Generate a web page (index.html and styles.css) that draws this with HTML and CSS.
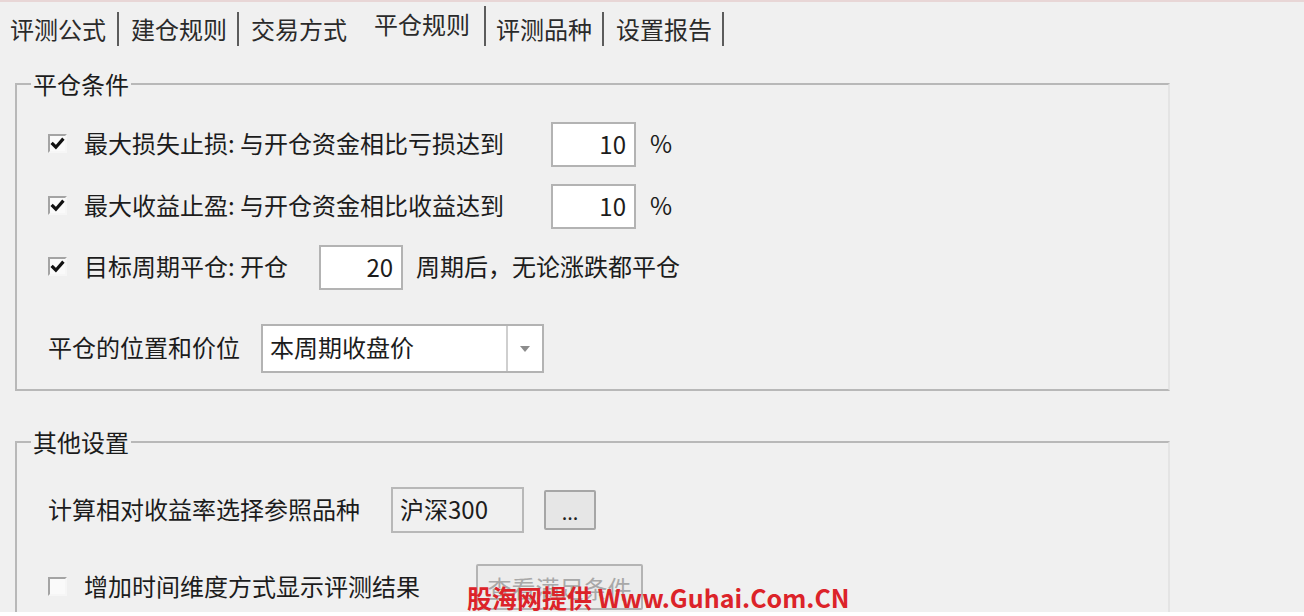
FILE: index.html
```html
<!DOCTYPE html>
<html lang="zh-CN">
<head>
    <meta charset="UTF-8">
    <title>平仓规则</title>
    <link rel="stylesheet" href="styles.css">
</head>
<body>
    <div class="window">
        <div class="tabs">
            <span class="tab first">评测公式</span>
            <span class="tab">建仓规则</span>
            <span class="tab before-active">交易方式</span>
            <span class="tab active">平仓规则</span>
            <span class="tab fifth">评测品种</span>
            <span class="tab">设置报告</span>
        </div>

        <fieldset class="group group-close">
            <legend>平仓条件</legend>
            <div class="row row-1">
                <span class="check checked"><svg viewBox="0 0 14 14" width="15" height="15"><path d="M1.5 6.5 L5.5 10.5 L12.5 2.5" fill="none" stroke="#111" stroke-width="3"/></svg></span>
                <span class="label wide">最大损失止损: 与开仓资金相比亏损达到</span>
                <span class="num">10</span>
                <span class="unit">%</span>
            </div>
            <div class="row row-2">
                <span class="check checked"><svg viewBox="0 0 14 14" width="15" height="15"><path d="M1.5 6.5 L5.5 10.5 L12.5 2.5" fill="none" stroke="#111" stroke-width="3"/></svg></span>
                <span class="label wide">最大收益止盈: 与开仓资金相比收益达到</span>
                <span class="num">10</span>
                <span class="unit">%</span>
            </div>
            <div class="row row-3">
                <span class="check checked"><svg viewBox="0 0 14 14" width="15" height="15"><path d="M1.5 6.5 L5.5 10.5 L12.5 2.5" fill="none" stroke="#111" stroke-width="3"/></svg></span>
                <span class="label">目标周期平仓: 开仓</span>
                <span class="num num-period">20</span>
                <span class="label after">周期后，无论涨跌都平仓</span>
            </div>
            <div class="row row-4">
                <span class="label">平仓的位置和价位</span>
                <div class="select">
                    <span class="select-text">本周期收盘价</span>
                    <span class="select-arrow"><svg viewBox="0 0 10 6" width="10" height="6"><path d="M0 0 H10 L5 6 Z" fill="#8c8c8c"/></svg></span>
                </div>
            </div>
        </fieldset>

        <fieldset class="group group-other">
            <legend>其他设置</legend>
            <div class="row row-ref">
                <span class="label">计算相对收益率选择参照品种</span>
                <span class="readonly">沪深300</span>
                <button type="button" class="btn btn-more">...</button>
            </div>
            <div class="row row-time">
                <span class="check"></span>
                <span class="label">增加时间维度方式显示评测结果</span>
                <button type="button" class="btn btn-view" disabled>查看满足条件</button>
            </div>
        </fieldset>

        <div class="watermark">股海网提供 Www.Guhai.Com.CN</div>
    </div>
</body>
</html>
```

FILE: styles.css
```css
body {
    margin: 0;
    background-color: #fff;
    font-family: "Noto Sans CJK SC", "Microsoft YaHei", sans-serif;
    font-size: 24px;
    color: #1c1c1c;
}
.window {
    position: relative;
    height: 610px;
    overflow: hidden;
    background-color: #f0f0f0;
    border-top: 2px solid #e8d6d6;
}

/* tabs */
.tabs {
    display: flex;
    align-items: flex-end;
    height: 40px;
    padding: 4px 0 0 10px;
}
.tab {
    height: 34px;
    line-height: 34px;
    padding: 0 10px 0 12px;
    border-right: 2px solid #5c5c5c;
    color: #2a2a2a;
}
.tab.first {
    padding-left: 0;
    padding-right: 11px;
}
.tab.before-active {
    border-right: none;
    padding-right: 14px;
}
.tab.active {
    height: 40px;
    line-height: 36px;
    padding: 0 14px 0 13px;
}
.tab.fifth {
    padding-left: 10px;
}

/* group boxes */
.group {
    width: 1137px;
    margin: 23px 0 0 15px;
    padding: 23px 0 16px 14px;
    border: 2px solid #b8b8b8;
    border-right-color: #e4e4e4;
}
.group legend {
    padding: 0 2px;
    line-height: 30px;
}
.group-other {
    margin-top: 36px;
    padding-top: 30px;
}

.row {
    display: flex;
    align-items: center;
    padding-left: 17px;
    height: 45px;
}
.row-2 { margin-top: 17px; }
.row-3 { margin-top: 16px; }
.row-4 {
    margin-top: 34px;
    height: 49px;
}
.row-ref { height: 46px; }
.row-time {
    height: 46px;
    margin-top: 31px;
}

.label {
    padding-bottom: 4px;
    white-space: nowrap;
}
.label.wide { width: 467px; }
.label.after { margin-left: 13px; }

.check {
    box-sizing: border-box;
    width: 19px;
    height: 19px;
    margin-right: 17px;
    margin-bottom: 2px;
    background-color: #fafafa;
    border-top: 2px solid #a4a4a4;
    border-left: 2px solid #a4a4a4;
    border-right: 2px solid #f6f6f6;
    border-bottom: 2px solid #f6f6f6;
    display: flex;
    align-items: center;
    justify-content: center;
}

.num {
    box-sizing: border-box;
    width: 85px;
    height: 45px;
    line-height: 40px;
    padding-right: 8px;
    text-align: right;
    background-color: #fff;
    border: 2px solid #b3b3b3;
}
.num-period {
    width: 84px;
    margin-left: 31px;
}
.unit { margin-left: 14px; padding-bottom: 4px; }

.select {
    box-sizing: border-box;
    display: flex;
    width: 283px;
    height: 49px;
    margin-left: 21px;
    background-color: #fff;
    border: 2px solid #b3b3b3;
}
.select-text {
    flex: 1;
    line-height: 42px;
    padding-left: 7px;
}
.select-arrow {
    width: 34px;
    border-left: 2px solid #cfcfcf;
    display: flex;
    align-items: center;
    justify-content: center;
}

.readonly {
    box-sizing: border-box;
    width: 133px;
    height: 46px;
    line-height: 40px;
    margin-left: 31px;
    padding-left: 7px;
    border: 2px solid #b8b8b8;
}
.btn {
    box-sizing: border-box;
    font-family: inherit;
    font-size: 24px;
    background-color: #e6e6e6;
    border: 2px solid #a6a6a6;
    border-radius: 2px;
    padding: 0;
    color: #222;
}
.btn-more {
    width: 52px;
    height: 40px;
    margin-left: 20px;
    line-height: 40px;
    font-size: 20px;
}
.btn-view {
    width: 167px;
    height: 46px;
    margin-left: 56px;
    color: #a8a8a8;
    background-color: #ececec;
    border-color: #b4b4b4;
}

.watermark {
    position: absolute;
    left: 467px;
    top: 580px;
    font-size: 25px;
    line-height: 30px;
    font-weight: bold;
    color: #dc2329;
    white-space: nowrap;
}
```
